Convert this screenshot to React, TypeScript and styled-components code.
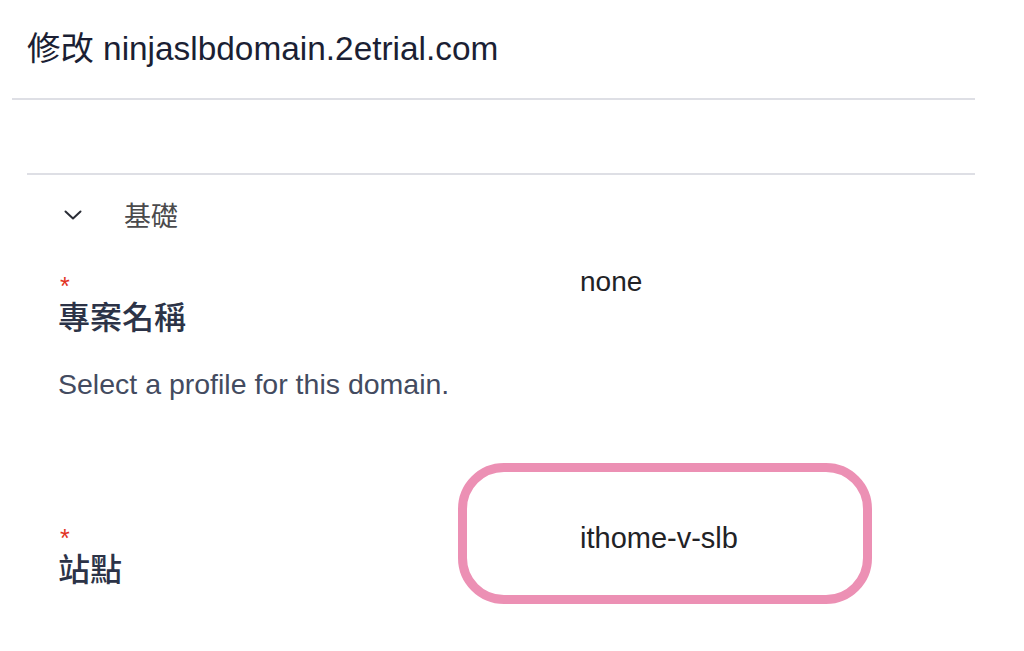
import React from "react";
import styled, { createGlobalStyle } from "styled-components";

const Global = createGlobalStyle`
  html, body { margin: 0; padding: 0; background: #ffffff; }
  body {
    font-family: "Liberation Sans", Arial, "Noto Sans CJK TC", sans-serif;
    -webkit-font-smoothing: antialiased;
  }
`;

const Page = styled.div`
  width: 1024px;
  height: 651px;
  overflow: hidden;
  background: #fff;
`;

const Header = styled.header`
  padding: 29px 0 29px 27px;
`;

const Title = styled.h1`
  margin: 0;
  font-size: 33.4px;
  line-height: 40px;
  font-weight: 400;
  color: #1b1f34;
  font-family: "Liberation Sans", Arial, "Noto Sans CJK TC", sans-serif;
`;

const Divider = styled.hr<{ $inset: number; $gap?: number }>`
  margin: ${(p) => p.$gap ?? 0}px 49px 0 ${(p) => p.$inset}px;
  border: 0;
  height: 2px;
  background: #dedfe5;
`;

const SectionHeader = styled.div`
  display: flex;
  align-items: center;
  height: 80px;
  padding-left: 64px;
  gap: 42px;
`;

const SectionTitle = styled.span`
  font-family: "Noto Sans CJK TC", sans-serif;
  font-size: 27px;
  line-height: 34px;
  color: #4a4a4c;
`;

const Form = styled.div`
  padding-left: 58px;
  display: flex;
  flex-direction: column;
`;

const FieldRow = styled.div<{ $top: number; $labelWidth: number }>`
  display: grid;
  grid-template-columns: ${(p) => p.$labelWidth}px 1fr;
  align-items: start;
  margin-top: ${(p) => p.$top}px;
`;

const LabelBlock = styled.div<{ $offset: number }>`
  display: flex;
  flex-direction: column;
  margin-top: ${(p) => p.$offset}px;
`;

const Required = styled.span`
  display: block;
  font-family: "Liberation Sans", Arial, sans-serif;
  font-size: 25px;
  line-height: 28px;
  height: 28px;
  padding-left: 2px;
  color: #e2331f;
`;

const Label = styled.span`
  font-family: "Liberation Sans", "Noto Sans CJK TC", sans-serif;
  font-size: 32px;
  line-height: 36px;
  color: #2c3347;
  font-weight: 500;
`;

const Value = styled.div<{ $size?: number }>`
  font-size: ${(p) => p.$size ?? 28}px;
  line-height: 34px;
  color: #222225;
`;

const Description = styled.p`
  margin: 31px 0 0;
  font-size: 28.5px;
  line-height: 34px;
  color: #434b60;
`;

const HighlightBox = styled.div`
  box-sizing: border-box;
  width: 414px;
  height: 141px;
  border: 9px solid #ec90b4;
  border-radius: 46px;
  display: flex;
  align-items: center;
  padding: 8px 0 0 113px;
`;

const Chevron = () => (
  <svg width="18" height="10" viewBox="0 0 18 10" fill="none">
    <polyline
      points="1.5,1.5 9,8.5 16.5,1.5"
      stroke="#2a2d36"
      strokeWidth="2"
      strokeLinecap="round"
      strokeLinejoin="round"
    />
  </svg>
);

export default function App() {
  return (
    <Page>
      <Global />
      <Header>
        <Title>修改 ninjaslbdomain.2etrial.com</Title>
      </Header>
      <Divider $inset={12} />
      <Divider $inset={27} $gap={73} />
      <SectionHeader>
        <Chevron />
        <SectionTitle>基礎</SectionTitle>
      </SectionHeader>
      <Form>
        <FieldRow $top={10} $labelWidth={522}>
          <LabelBlock $offset={7}>
            <Required>*</Required>
            <Label>專案名稱</Label>
          </LabelBlock>
          <Value>none</Value>
        </FieldRow>
        <Description>Select a profile for this domain.</Description>
        <FieldRow $top={62} $labelWidth={400}>
          <LabelBlock $offset={61}>
            <Required>*</Required>
            <Label>站點</Label>
          </LabelBlock>
          <HighlightBox>
            <Value $size={29}>ithome-v-slb</Value>
          </HighlightBox>
        </FieldRow>
      </Form>
    </Page>
  );
}
